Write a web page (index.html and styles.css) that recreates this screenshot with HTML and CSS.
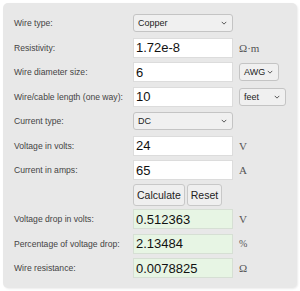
FILE: index.html
```html
<!DOCTYPE html>
<html lang="en">
<head>
    <meta charset="UTF-8">
    <meta name="viewport" content="width=device-width, initial-scale=1.0">
    <title>Voltage Drop Calculator</title>
    <link rel="stylesheet" href="styles.css">
</head>
<body>
    <div class="calc">
        <label class="lbl">Wire type:</label>
        <div class="sel sel-wide">
            <span>Copper</span>
            <svg viewBox="0 0 8 5" class="chev"><path d="M1 1 L4 4 L7 1" /></svg>
        </div>
        <span></span>

        <label class="lbl">Resistivity:</label>
        <input class="field" type="text" value="1.72e-8">
        <span class="unit">Ω·m</span>

        <label class="lbl">Wire diameter size:</label>
        <input class="field" type="text" value="6">
        <div class="sel sel-awg">
            <span>AWG</span>
            <svg viewBox="0 0 8 5" class="chev"><path d="M1 1 L4 4 L7 1" /></svg>
        </div>

        <label class="lbl">Wire/cable length (one way):</label>
        <input class="field" type="text" value="10">
        <div class="sel sel-feet">
            <span>feet</span>
            <svg viewBox="0 0 8 5" class="chev"><path d="M1 1 L4 4 L7 1" /></svg>
        </div>

        <label class="lbl">Current type:</label>
        <div class="sel sel-wide">
            <span>DC</span>
            <svg viewBox="0 0 8 5" class="chev"><path d="M1 1 L4 4 L7 1" /></svg>
        </div>
        <span></span>

        <label class="lbl">Voltage in volts:</label>
        <input class="field" type="text" value="24">
        <span class="unit">V</span>

        <label class="lbl">Current in amps:</label>
        <input class="field" type="text" value="65">
        <span class="unit">A</span>

        <span></span>
        <div class="btns">
            <button class="btn">Calculate</button>
            <button class="btn">Reset</button>
        </div>
        <span></span>

        <label class="lbl">Voltage drop in volts:</label>
        <input class="field result" type="text" value="0.512363" readonly>
        <span class="unit">V</span>

        <label class="lbl">Percentage of voltage drop:</label>
        <input class="field result" type="text" value="2.13484" readonly>
        <span class="unit pct">%</span>

        <label class="lbl">Wire resistance:</label>
        <input class="field result" type="text" value="0.0078825" readonly>
        <span class="unit">Ω</span>
    </div>
</body>
</html>
```

FILE: styles.css
```css
body {
    margin: 0;
    background-color: #fff;
    font-family: "Liberation Sans", Arial, sans-serif;
}

.calc {
    margin: 3px;
    width: 272px;
    height: 266px;
    padding: 10px 11px 9px 11px;
    background-color: #e8e8e8;
    border-radius: 5px;
    box-shadow: 1px 1px 2px rgba(0, 0, 0, 0.08);
    display: grid;
    grid-template-columns: 113px 100px auto;
    grid-auto-rows: 20px;
    column-gap: 6px;
    row-gap: 4.5px;
    align-items: center;
}

.lbl {
    font-size: 8.6px;
    color: #444;
    white-space: nowrap;
}

.field {
    box-sizing: border-box;
    width: 100px;
    height: 20px;
    margin: 0;
    padding: 0 2px;
    border: 1px solid #dcdcdc;
    background-color: #fff;
    font-family: "Liberation Sans", Arial, sans-serif;
    font-size: 13px;
    color: #111;
    outline: none;
}

.field.result {
    background-color: #e7f5e4;
    border-color: #d6dfd4;
}

.unit {
    font-family: "Liberation Serif", "Times New Roman", serif;
    font-size: 11px;
    color: #555;
}

.unit.pct {
    font-size: 10px;
}

/* selects */
.sel {
    box-sizing: border-box;
    height: 18px;
    display: flex;
    align-items: center;
    justify-content: space-between;
    padding: 0 5px 0 4px;
    background-color: #f0f0f0;
    border: 1px solid #c4c4c4;
    border-radius: 3px;
    font-size: 9px;
    color: #222;
}

.sel-wide {
    width: 100px;
}

.sel-awg {
    width: 40px;
}

.sel-feet {
    width: 47px;
}

.chev {
    width: 6px;
    height: 4px;
    fill: none;
    stroke: #555;
    stroke-width: 1.3;
}

/* buttons */
.btns {
    display: flex;
    gap: 2px;
    height: 22px;
}

.btn {
    height: 22px;
    padding: 0 3px;
    margin: 0;
    background-color: #efefef;
    border: 1px solid #c8c8c8;
    border-radius: 3px;
    font-family: "Liberation Sans", Arial, sans-serif;
    font-size: 10.5px;
    color: #222;
}
```
